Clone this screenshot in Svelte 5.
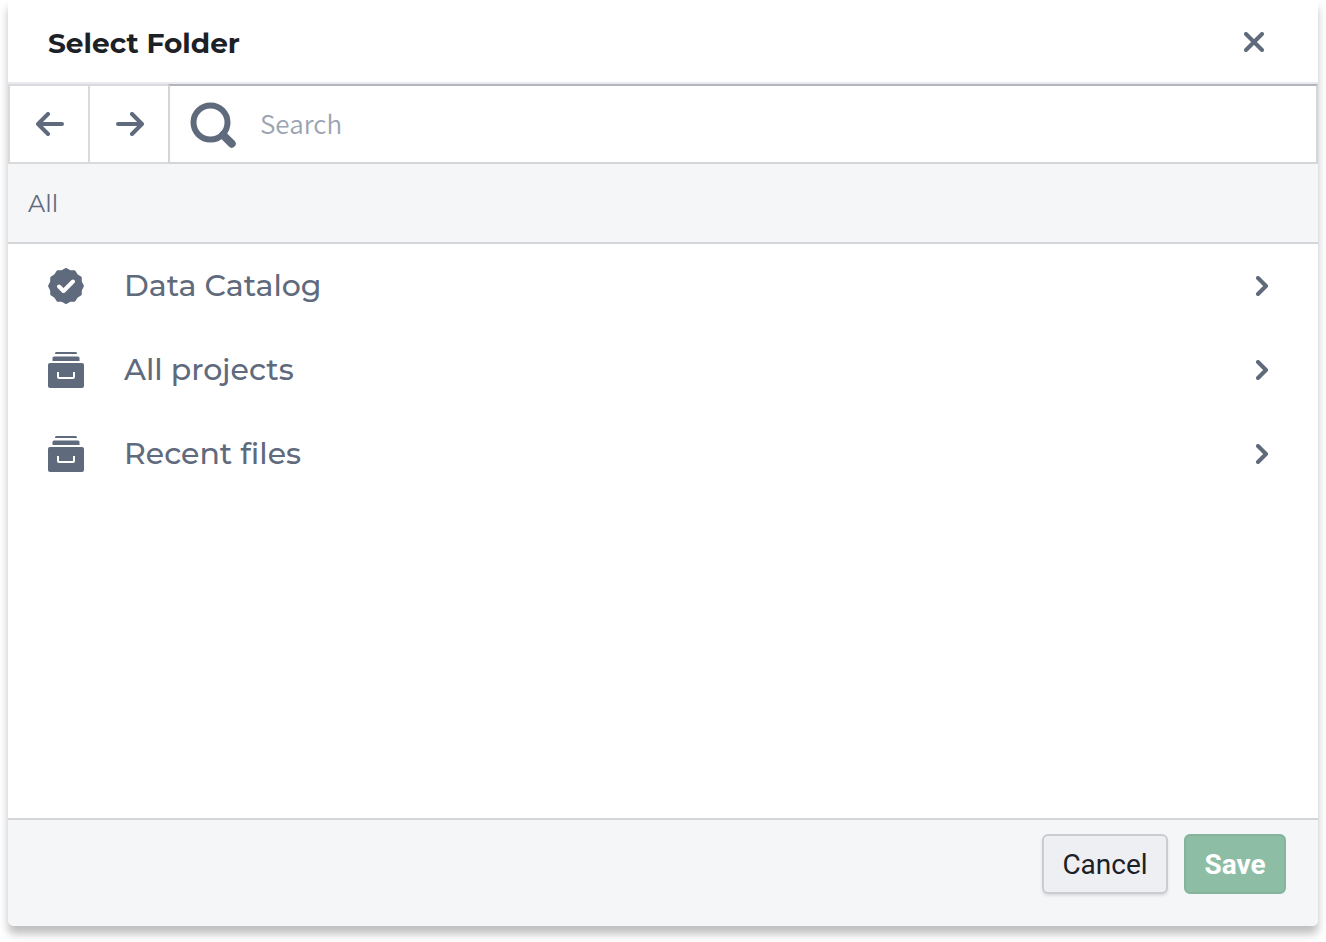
<script>
  const folders = [
    { name: 'Data Catalog', icon: 'verified' },
    { name: 'All projects', icon: 'archive' },
    { name: 'Recent files', icon: 'archive' }
  ];

  // Outline of the twelve-lobed badge.
  const badge = Array.from({ length: 24 }, (_, i) => {
    const angle = (i * Math.PI) / 12 - Math.PI / 2;
    const radius = i % 2 ? 15.6 : 17.2;
    return `${(18 + radius * Math.cos(angle)).toFixed(2)},${(18 + radius * Math.sin(angle)).toFixed(2)}`;
  }).join(' ');

  let query = $state('');
</script>

<div class="dialog" role="dialog" aria-labelledby="title">
  <header>
    <h1 id="title">Select Folder</h1>
    <button class="close" aria-label="Close">
      <svg width="20" height="20" viewBox="0 0 20 20"><path class="line" d="M2 2l16 16M18 2L2 18" /></svg>
    </button>
  </header>

  <div class="toolbar">
    <button class="nav" aria-label="Back">
      <svg width="28" height="24" viewBox="0 0 28 24"><path class="line" d="M2 12h24M12 2L2 12l10 10" /></svg>
    </button>
    <button class="nav" aria-label="Forward">
      <svg width="28" height="24" viewBox="0 0 28 24"><path class="line" d="M26 12H2M16 2l10 10-10 10" /></svg>
    </button>
    <label class="search">
      <svg width="46" height="46" viewBox="0 0 46 46">
        <circle cx="20.500" cy="20.500" r="17" fill="none" stroke="currentColor" stroke-width="6" />
        <path d="M33 33l8.700 8.700" fill="none" stroke="currentColor" stroke-width="8" stroke-linecap="round" />
      </svg>
      <input type="text" placeholder="Search" aria-label="Search" bind:value={query} />
    </label>
  </div>

  <nav class="crumbs"><a href="#all">All</a></nav>

  <ul>
    {#each folders as folder}
      <li>
        <button class="row">
          <svg width="36" height="36" viewBox="0 0 36 36">
            {#if folder.icon === 'verified'}
              <polygon points={badge} fill="currentColor" stroke="currentColor" stroke-width="1.6" stroke-linejoin="round" />
              <path d="M11 18.5l4.5 4.5 9.5-9.5" fill="none" stroke="#fff" stroke-width="4" stroke-linecap="round" stroke-linejoin="round" />
            {:else}
              <path d="M8 0h20q1 0 1 2H7q0-2 1-2zM6 4.500h24q1.500 0 1.500 1.500V9h-27V6Q4.500 4.500 6 4.500z" fill="currentColor" />
              <rect y="11" width="36" height="25" rx="2" fill="currentColor" />
              <path d="M10 20v5q0 1 1 1h14q1 0 1-1v-5" fill="none" stroke="#fff" stroke-width="2" />
            {/if}
          </svg>
          <span>{folder.name}</span>
          <svg width="14" height="20" viewBox="0 0 14 20"><path class="line" d="M3 2l8 8-8 8" /></svg>
        </button>
      </li>
    {/each}
  </ul>

  <footer>
    <button class="action cancel">Cancel</button>
    <button class="action save">Save</button>
  </footer>
</div>

<style>
  :global(body) {
    margin: 0;
    background: #fff;
  }
  * {
    box-sizing: border-box;
  }
  .dialog {
    display: flex;
    flex-direction: column;
    min-height: calc(100vh - 16px);
    margin: 0 8px 16px;
    border-radius: 0 0 6px 6px;
    background: #fff;
    color: #5f6b7d;
    font-family: Montserrat, Inter, sans-serif;
    box-shadow: 0 8px 8px rgba(0, 0, 0, 0.25);
  }
  button {
    margin: 0;
    padding: 0;
    border: 0;
    background: none;
    color: inherit;
    font: inherit;
    cursor: pointer;
  }
  svg {
    display: block;
    flex: none;
  }
  .line {
    fill: none;
    stroke: currentColor;
    stroke-width: 4;
    stroke-linecap: round;
    stroke-linejoin: round;
  }
  header {
    display: flex;
    align-items: center;
    justify-content: space-between;
    height: 84px;
    padding: 2px 40px 0;
    border-bottom: 2px solid #e9e9f0;
  }
  h1 {
    margin: 0;
    padding-top: 2px;
    color: #1c2127;
    font-size: 28px;
    line-height: 36px;
    font-weight: 700;
  }
  .close {
    display: grid;
    place-items: center;
    width: 48px;
    height: 48px;
  }
  .toolbar {
    display: flex;
    height: 80px;
  }
  .nav {
    display: grid;
    place-items: center;
    width: 80px;
    padding-left: 2px;
    border: 2px solid #dadadc;
    border-right: 0;
  }
  .search {
    display: flex;
    flex: 1;
    align-items: center;
    gap: 24px;
    padding: 2px 20px 0;
    border: 2px solid #d5d5d8;
    border-top-color: #b4b4bb;
  }
  input {
    flex: 1;
    min-width: 0;
    padding: 0 0 4px;
    border: 0;
    outline: 0;
    background: none;
    color: #1c2127;
    font-family: "Source Sans Pro", "Noto Sans CJK SC", sans-serif;
    font-size: 26px;
    line-height: 36px;
    font-weight: 350;
  }
  input::placeholder {
    color: #9ba4b1;
    opacity: 1;
  }
  .crumbs {
    display: flex;
    align-items: center;
    height: 80px;
    padding: 2px 20px 0;
    border-bottom: 2px solid #d3d5d9;
    background: #f5f6f8;
  }
  .crumbs a {
    color: inherit;
    font-size: 24px;
    line-height: 32px;
    font-weight: 400;
    text-decoration: none;
  }
  ul {
    flex: 1;
    margin: 0;
    padding: 0;
    list-style: none;
  }
  .row {
    display: flex;
    align-items: center;
    gap: 40px;
    width: 100%;
    height: 84px;
    padding: 0 49px 0 40px;
    text-align: left;
  }
  .row span {
    flex: 1;
    font-size: 30px;
    line-height: 40px;
    font-weight: 500;
  }
  footer {
    display: flex;
    justify-content: flex-end;
    gap: 16px;
    padding: 14px 32px 32px;
    border-top: 2px solid #d3d5d9;
    border-radius: 0 0 6px 6px;
    background: #f5f6f8;
  }
  .action {
    height: 60px;
    min-width: 102px;
    padding: 2px 18px 0;
    border: 2px solid #cbcccf;
    border-radius: 6px;
    font-family: Roboto, sans-serif;
    font-size: 28px;
    line-height: 36px;
  }
  .cancel {
    min-width: 126px;
    background: #edeff3;
    color: #1c2127;
    box-shadow: 0 2px 3px rgba(0, 0, 0, 0.1);
  }
  .save {
    border-color: #85b39b;
    background: #8ebda5;
    color: #fff;
    font-weight: 700;
  }
</style>
